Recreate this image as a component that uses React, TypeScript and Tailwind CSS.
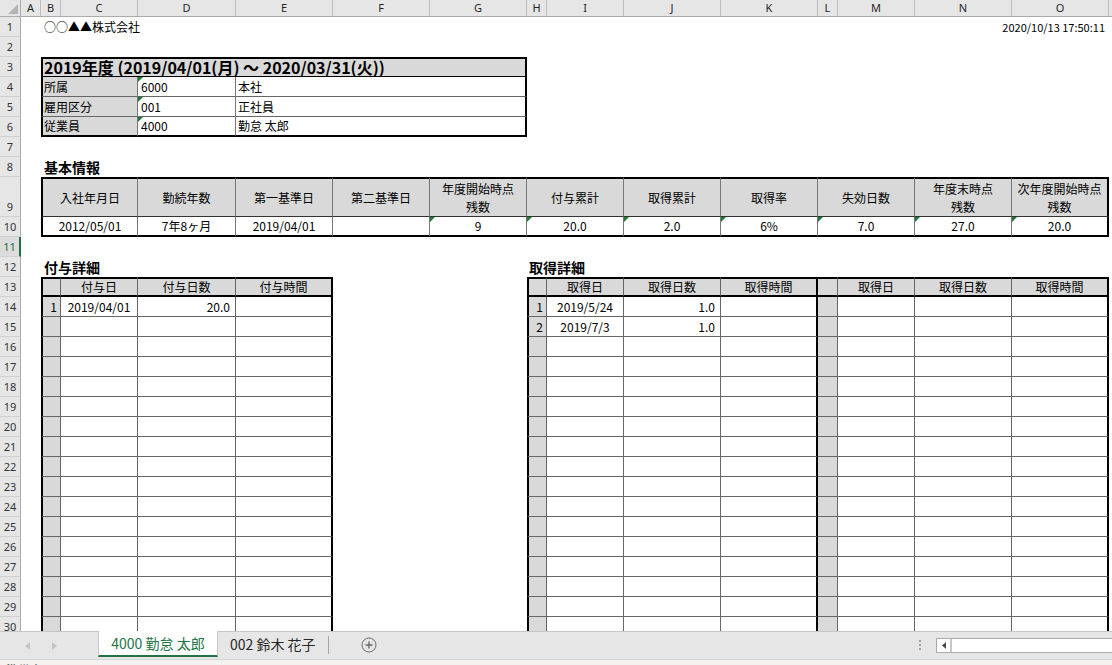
import type { ReactNode } from 'react';

// sheet column tracks: row header, A … O, then the sliver of P
const COLS =
  'grid grid-rows-1 grid-cols-[21px_20px_20px_77px_98px_97px_97px_97px_20px_77px_97px_97px_20px_77px_97px_97px_1fr]';

const LETTERS = 'ABCDEFGHIJKLMNO'.split('');

const ORG = [
  ['所属', '6000', '本社'],
  ['雇用区分', '001', '正社員'],
  ['従業員', '4000', '勤怠 太郎'],
];

const BASE: { span: string; head: string[]; val: string; mark?: boolean }[] = [
  { span: 'col-start-3 col-span-2', head: ['入社年月日'], val: '2012/05/01' },
  { span: 'col-start-5', head: ['勤続年数'], val: '7年8ヶ月' },
  { span: 'col-start-6', head: ['第一基準日'], val: '2019/04/01' },
  { span: 'col-start-7', head: ['第二基準日'], val: '' },
  { span: 'col-start-8', head: ['年度開始時点', '残数'], val: '9', mark: true },
  { span: 'col-start-9 col-span-2', head: ['付与累計'], val: '20.0', mark: true },
  { span: 'col-start-11', head: ['取得累計'], val: '2.0', mark: true },
  { span: 'col-start-12', head: ['取得率'], val: '6%', mark: true },
  { span: 'col-start-13 col-span-2', head: ['失効日数'], val: '7.0', mark: true },
  { span: 'col-start-15', head: ['年度末時点', '残数'], val: '27.0', mark: true },
  { span: 'col-start-16', head: ['次年度開始時点', '残数'], val: '20.0', mark: true },
];

const GRANTS = [{ date: '2019/04/01', days: '20.0' }];
const TAKES = [
  { date: '2019/5/24', days: '1.0' },
  { date: '2019/7/3', days: '1.0' },
];

const DETAIL_ROWS = Array.from({ length: 17 }, (_, i) => 14 + i);

function Cell({
  className = '',
  mark = false,
  spill = false,
  children,
}: {
  className?: string;
  mark?: boolean;
  spill?: boolean;
  children?: ReactNode;
}) {
  return (
    <div
      className={`relative flex min-w-0 items-center whitespace-nowrap ${spill ? 'overflow-visible' : 'overflow-hidden'} ${className}`}
    >
      {mark && (
        <span className="absolute left-0 top-0 h-0 w-0 border-t-[5px] border-r-[5px] border-t-[#1e7b34] border-r-transparent" />
      )}
      {children}
    </div>
  );
}

function Row({ n, tall = false, active = false, children }: { n: number; tall?: boolean; active?: boolean; children?: ReactNode }) {
  return (
    <div className={`${COLS} ${tall ? 'h-[40px]' : 'h-[20px]'}`}>
      <div
        className={`flex items-end justify-center border-b border-b-[#d0d0d0] pb-[2px] font-['Noto_Sans',sans-serif] text-[11px] leading-[14px] ${
          active ? 'border-r-2 border-r-[#217346] bg-[#dcdcdc] text-[#1d6b3f]' : 'border-r border-r-[#ababab] bg-[#e6e6e6] text-[#333]'
        }`}
      >
        {n}
      </div>
      {children}
    </div>
  );
}

function ColumnHeader() {
  return (
    <div className={`${COLS} h-[17px] border-b border-[#ababab] bg-[#e6e6e6]`}>
      <div className="flex items-end justify-end border-r border-[#ababab] pb-[2px] pr-[2px]">
        <svg width="10" height="10" viewBox="0 0 10 10">
          <polygon points="10,0 10,10 0,10" fill="#b4b4b4" />
        </svg>
      </div>
      {LETTERS.map(l => (
        <div
          key={l}
          className="flex items-center justify-center border-r border-[#bdbdbd] font-['Noto_Sans',sans-serif] text-[11px] text-[#262626]"
        >
          {l}
        </div>
      ))}
      <div />
    </div>
  );
}

function TabBar() {
  return (
    <div className="flex h-[28px] shrink-0 items-start border-t border-[#c6c6c6] bg-[#e6e6e6]">
      <div className="flex h-full w-[98px] shrink-0 items-center gap-[22px] pl-[25px]">
        <svg width="5" height="8" viewBox="0 0 5 8">
          <polygon points="5,0 0,4 5,8" fill="#c4c4c4" />
        </svg>
        <svg width="5" height="8" viewBox="0 0 5 8">
          <polygon points="0,0 5,4 0,8" fill="#c4c4c4" />
        </svg>
      </div>
      <div className="-mt-px flex h-[26px] w-[120px] shrink-0 items-center justify-center border-x border-b-2 border-x-[#c6c6c6] border-b-[#217346] bg-white text-[14px] text-[#217346]">
        4000 勤怠 太郎
      </div>
      <div className="flex h-[25px] shrink-0 items-center px-[12px] text-[14px] text-[#262626]">002 鈴木 花子</div>
      <div className="mt-[4px] h-[18px] w-px shrink-0 bg-[#a6a6a6]" />
      <div className="ml-[32px] flex h-[26px] shrink-0 items-center">
        <svg width="16" height="16" viewBox="0 0 16 16">
          <circle cx="8" cy="8" r="7" fill="none" stroke="#6b6b6b" strokeWidth="1" />
          <path d="M8 4.5v7M4.5 8h7" stroke="#6b6b6b" strokeWidth="1.4" />
        </svg>
      </div>
      <div className="flex-1" />
      <div className="mt-[8px] flex shrink-0 flex-col gap-[2px] pr-[15px]">
        <span className="h-[2px] w-[2px] bg-[#a0a0a0]" />
        <span className="h-[2px] w-[2px] bg-[#a0a0a0]" />
        <span className="h-[2px] w-[2px] bg-[#a0a0a0]" />
      </div>
      <div className="mt-[6px] flex h-[15px] w-[176px] shrink-0 border-y border-l border-[#ababab] bg-white">
        <div className="flex w-[13px] items-center justify-center">
          <svg width="4" height="7" viewBox="0 0 4 7">
            <polygon points="4,0 0,3.5 4,7" fill="#4a4a4a" />
          </svg>
        </div>
        <div className="w-[2px] bg-[#c8c8c8]" />
        <div className="flex-1 bg-white" />
      </div>
    </div>
  );
}

export default function App() {
  return (
    <div className="flex h-[665px] w-[1112px] flex-col overflow-hidden bg-white font-['Noto_Sans_CJK_JP',sans-serif] text-[12px] text-black">
      <div className="h-[631px] shrink-0 overflow-hidden">
        <ColumnHeader />

        <Row n={1}>
          <Cell className="col-start-3 col-span-4 pl-[3px]">○○▲▲株式会社</Cell>
          <Cell className="col-start-15 col-span-2 justify-end pr-[4px] text-[11px]">2020/10/13 17:50:11</Cell>
        </Row>
        <Row n={2} />

        {/* period / organisation block */}
        <Row n={3}>
          <Cell
            spill
            className="col-start-3 col-span-6 border-x-2 border-t-2 border-b border-black bg-[#d9d9d9] pl-[1px] text-[16px] font-bold leading-[17px]"
          >
            2019年度 (2019/04/01(月) ～ 2020/03/31(火))
          </Cell>
        </Row>
        {ORG.map(([label, code, name], i) => {
          const last = i === ORG.length - 1;
          const bottom = last ? 'border-b-2 border-b-black' : 'border-b border-b-[#666]';
          return (
            <Row key={label} n={4 + i}>
              <Cell className={`col-start-3 col-span-2 border-l-2 border-r border-l-black border-r-[#777] bg-[#d9d9d9] pl-[1px] ${bottom}`}>
                {label}
              </Cell>
              <Cell mark className={`col-start-5 border-r border-r-[#777] pl-[3px] ${bottom}`}>
                {code}
              </Cell>
              <Cell className={`col-start-6 col-span-3 border-r-2 border-r-black pl-[2px] ${bottom}`}>{name}</Cell>
            </Row>
          );
        })}

        <Row n={7} />
        <Row n={8}>
          <Cell className="col-start-3 col-span-3 pl-[3px] text-[14px] font-bold">基本情報</Cell>
        </Row>

        {/* summary table */}
        <Row n={9} tall>
          {BASE.map((c, i) => (
            <Cell
              key={c.span}
              className={`${c.span} flex-col justify-center border-t-2 border-r border-b border-t-black border-r-[#777] border-b-[#333] bg-[#d9d9d9] text-center leading-[18px] ${
                i === 0 ? 'border-l-2 border-l-black' : ''
              } ${i === BASE.length - 1 ? 'border-r-2 border-r-black' : ''}`}
            >
              {c.head.map(h => (
                <span key={h}>{h}</span>
              ))}
            </Cell>
          ))}
        </Row>
        <Row n={10}>
          {BASE.map((c, i) => (
            <Cell
              key={c.span}
              mark={c.mark}
              className={`${c.span} justify-center border-r border-b-2 border-r-[#777] border-b-black ${
                i === 0 ? 'border-l-2 border-l-black' : ''
              } ${i === BASE.length - 1 ? 'border-r-2 border-r-black' : ''}`}
            >
              {c.val}
            </Cell>
          ))}
        </Row>

        <Row n={11} active />
        <Row n={12}>
          <Cell className="col-start-3 col-span-3 pl-[3px] text-[14px] font-bold">付与詳細</Cell>
          <Cell className="col-start-9 col-span-3 pl-[2px] text-[14px] font-bold">取得詳細</Cell>
        </Row>

        {/* grant / take detail headers */}
        <Row n={13}>
          <Cell className="col-start-3 border-y-2 border-l-2 border-r border-black border-r-[#666] bg-[#d9d9d9]" />
          <Cell className="col-start-4 justify-center border-y-2 border-r border-black border-r-[#666] bg-[#d9d9d9]">付与日</Cell>
          <Cell className="col-start-5 justify-center border-y-2 border-r border-black border-r-[#666] bg-[#d9d9d9]">付与日数</Cell>
          <Cell className="col-start-6 justify-center border-y-2 border-r-2 border-black bg-[#d9d9d9]">付与時間</Cell>

          <Cell className="col-start-9 border-y-2 border-l-2 border-r border-black border-r-[#666] bg-[#d9d9d9]" />
          <Cell className="col-start-10 justify-center border-y-2 border-r border-black border-r-[#666] bg-[#d9d9d9]">取得日</Cell>
          <Cell className="col-start-11 justify-center border-y-2 border-r border-black border-r-[#666] bg-[#d9d9d9]">取得日数</Cell>
          <Cell className="col-start-12 justify-center border-y-2 border-r-2 border-black bg-[#d9d9d9]">取得時間</Cell>
          <Cell className="col-start-13 border-y-2 border-r border-black border-r-[#666] bg-[#d9d9d9]" />
          <Cell className="col-start-14 justify-center border-y-2 border-r border-black border-r-[#666] bg-[#d9d9d9]">取得日</Cell>
          <Cell className="col-start-15 justify-center border-y-2 border-r border-black border-r-[#666] bg-[#d9d9d9]">取得日数</Cell>
          <Cell className="col-start-16 justify-center border-y-2 border-r-2 border-black bg-[#d9d9d9]">取得時間</Cell>
        </Row>

        {DETAIL_ROWS.map((n, i) => {
          const g = GRANTS[i];
          const t = TAKES[i];
          return (
            <Row key={n} n={n}>
              <Cell className="col-start-3 justify-end border-b border-l-2 border-r border-[#666] border-l-black bg-[#d9d9d9] pr-[3px]">
                {g ? i + 1 : ''}
              </Cell>
              <Cell className="col-start-4 justify-center border-b border-r border-[#666]">{g?.date}</Cell>
              <Cell className="col-start-5 justify-end border-b border-r border-[#666] pr-[5px]">{g?.days}</Cell>
              <Cell className="col-start-6 border-b border-r-2 border-b-[#666] border-r-black" />

              <Cell className="col-start-9 justify-end border-b border-l-2 border-r border-[#666] border-l-black bg-[#d9d9d9] pr-[3px]">
                {t ? i + 1 : ''}
              </Cell>
              <Cell className="col-start-10 justify-center border-b border-r border-[#666]">{t?.date}</Cell>
              <Cell className="col-start-11 justify-end border-b border-r border-[#666] pr-[5px]">{t?.days}</Cell>
              <Cell className="col-start-12 border-b border-r-2 border-b-[#666] border-r-black" />
              <Cell className="col-start-13 border-b border-r border-[#666] bg-[#d9d9d9]" />
              <Cell className="col-start-14 border-b border-r border-[#666]" />
              <Cell className="col-start-15 border-b border-r border-[#666]" />
              <Cell className="col-start-16 border-b border-r-2 border-b-[#666] border-r-black" />
            </Row>
          );
        })}
      </div>

      <TabBar />

      <div className="h-[22px] shrink-0 border-t border-[#d4d4d4] bg-[#f3f2f1] pl-[6px] pt-[1px] text-[12px] text-[#444]">準備完了</div>
    </div>
  );
}
